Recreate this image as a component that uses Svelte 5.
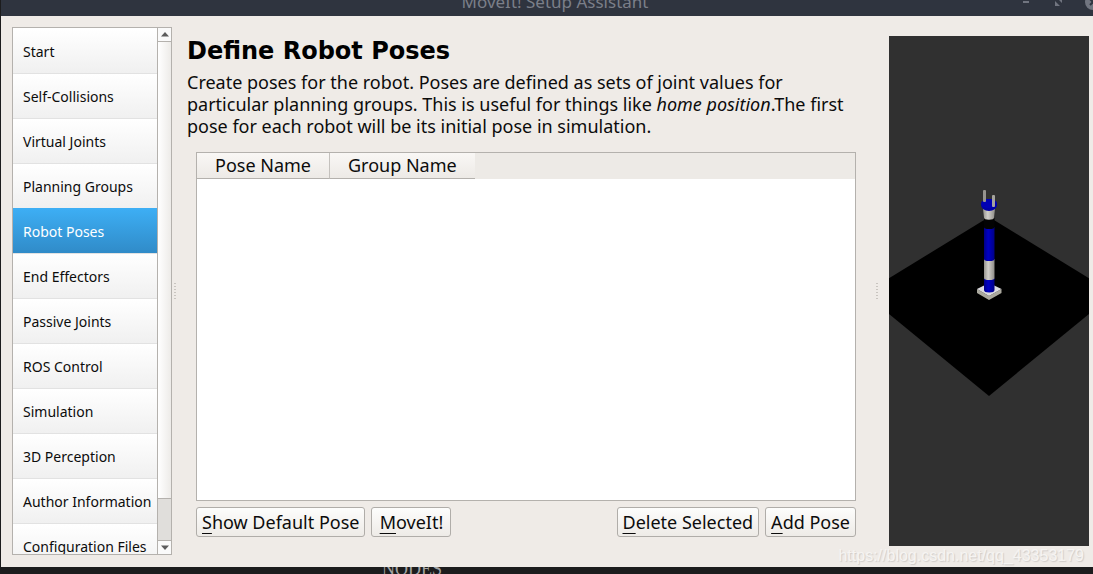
<script lang="ts">
	const steps: string[] = [
		'Start',
		'Self-Collisions',
		'Virtual Joints',
		'Planning Groups',
		'Robot Poses',
		'End Effectors',
		'Passive Joints',
		'ROS Control',
		'Simulation',
		'3D Perception',
		'Author Information',
		'Configuration Files'
	];

	const columns: string[] = ['Pose Name', 'Group Name'];

	let selected = $state('Robot Poses');
</script>

<div class="desktop">
	<header class="titlebar">
		<span class="title">MoveIt! Setup Assistant</span>
		<div class="window-controls">
			<button aria-label="Minimize">
				<svg width="10" height="10" viewBox="0 0 10 10"><path d="M2 5h6" stroke="#717580" stroke-width="2" /></svg>
			</button>
			<button aria-label="Maximize">
				<svg width="10" height="10" viewBox="0 0 10 10"><path d="M4 1h5v5zM2 4v5h5z" fill="#717580" /></svg>
			</button>
			<button aria-label="Close">
				<svg width="16" height="16" viewBox="0 0 16 16">
					<circle cx="8" cy="8" r="8" fill="#717580" />
					<path d="M5 5l6 6M11 5l-6 6" stroke="#2f343f" stroke-width="2" />
				</svg>
			</button>
		</div>
	</header>

	<main class="window">
		<div class="sidebar">
			<nav class="steps">
				{#each steps as step}
					<button class="step" class:active={step === selected} onclick={() => (selected = step)}>{step}</button>
				{/each}
			</nav>
			<div class="scrollbar">
				<button class="arrow" aria-label="Scroll up">
					<svg width="8" height="5" viewBox="0 0 8 5"><path d="M4 0l4 4.500H0z" fill="#5c5c5c" /></svg>
				</button>
				<div class="thumb"></div>
				<div class="groove"></div>
				<button class="arrow down" aria-label="Scroll down">
					<svg width="8" height="5" viewBox="0 0 8 5"><path d="M4 5l4-4.500H0z" fill="#5c5c5c" /></svg>
				</button>
			</div>
		</div>

		<div class="splitter"></div>

		<section class="content">
			<h1>Define Robot Poses</h1>
			<p>
				Create poses for the robot. Poses are defined as sets of joint values for<br />
				particular planning groups. This is useful for things like <em>home position</em>.The first<br />
				pose for each robot will be its initial pose in simulation.
			</p>

			<div class="pose-area">
				<div class="table-frame">
					<table>
						<thead>
							<tr>
								{#each columns as column}
									<th>{column}</th>
								{/each}
							</tr>
						</thead>
					</table>
				</div>
				<div class="actions">
					<button><u>S</u>how Default Pose</button>
					<button class="moveit"><u>M</u>oveIt!</button>
					<span class="spacer"></span>
					<button><u>D</u>elete Selected</button>
					<button><u>A</u>dd Pose</button>
				</div>
			</div>
		</section>

		<div class="splitter"></div>

		<div class="viewer">
			<svg viewBox="0 0 200 510" preserveAspectRatio="xMidYMid slice" role="img" aria-label="Robot model">
				<defs>
					<linearGradient id="blue">
						<stop offset="0" stop-color="#000086" />
						<stop offset="0.4" stop-color="#0000c4" />
						<stop offset="1" stop-color="#000086" />
					</linearGradient>
					<linearGradient id="grey">
						<stop offset="0" stop-color="#96948e" />
						<stop offset="0.4" stop-color="#d2d0cb" />
						<stop offset="1" stop-color="#8e8c87" />
					</linearGradient>
				</defs>
				<rect width="200" height="510" fill="#303030" />
				<path d="M100 181L225 257.500L100 360L-25 257.500z" fill="#000" />

				<!-- base -->
				<path d="M88 253v4l12 7 12.500-7v-4L100 260z" fill="#aaa89d" />
				<path d="M88 253l12-6 12.500 6L100 260z" fill="#dcdbe0" />

				<!-- arm links -->
				<path d="M95 242h10.500v12a5.200 2.500 0 0 1-10.500 0z" fill="url(#blue)" />
				<path d="M95 223h10.500v19a5.200 2 0 0 1-10.500 0z" fill="url(#grey)" />
				<path d="M95 191h10.500v32a5.200 2 0 0 1-10.500 0z" fill="url(#blue)" />
				<path d="M95 182h10.500v9a5.200 2 0 0 1-10.500 0z" fill="#030303" />
				<path d="M94 173h12l-1 8.500a5 2.200 0 0 1-10 0z" fill="url(#grey)" />

				<!-- gripper -->
				<ellipse cx="100" cy="169" rx="8" ry="6" fill="#0000a6" />
				<ellipse cx="100" cy="167.500" rx="8" ry="4.500" fill="#0000b4" />
				<rect x="94" y="154" width="3" height="12" rx="1" fill="#96948f" />
				<rect x="103" y="159" width="3" height="12" rx="1" fill="#a5a39e" />
			</svg>
		</div>
	</main>

	<footer class="terminal">NODES</footer>
	<div class="watermark">https://blog.csdn.net/qq_43353179</div>
</div>

<style>
	:global(body) {
		margin: 0;
	}

	.desktop {
		position: relative;
		display: flex;
		flex-direction: column;
		height: 100vh;
		overflow: hidden;
		background: #1c1c1d;
		color: #0c0c0c;
		font-family: 'Noto Sans', 'Open Sans', sans-serif;
	}

	button {
		margin: 0;
		font-family: inherit;
		color: inherit;
	}

	.titlebar {
		display: grid;
		grid-template-columns: 1fr auto 1fr;
		grid-template-rows: 28px;
		align-content: end;
		align-items: center;
		flex: none;
		height: 16px;
		margin-left: 1px;
		overflow: hidden;
		background: #2f343f;
	}

	.title {
		grid-column: 2;
		margin-left: 16px;
		font-size: 17px;
		line-height: 28px;
		color: #7b7f89;
	}

	.window-controls {
		display: flex;
		justify-content: flex-end;
		align-items: center;
		gap: 22px;
		margin-right: -8px;
	}

	.window-controls button {
		display: flex;
		padding: 0;
		border: 0;
		background: none;
	}

	.window {
		display: flex;
		flex: 1;
		min-height: 0;
		margin-left: 1px;
		padding: 11px 4px 12px 11px;
		background: #efebe7;
	}

	.sidebar {
		display: flex;
		flex: none;
		box-sizing: border-box;
		width: 160px;
		border: 1px solid #b4b1ad;
	}

	.steps {
		flex: 1;
		overflow: hidden;
		background: #fff;
	}

	.step {
		display: block;
		box-sizing: border-box;
		width: 100%;
		height: 45px;
		padding: 0 0 0 10px;
		border: 0;
		border-top: 1px solid #e2e2e2;
		background: linear-gradient(#fff, #f0f0f0);
		font-size: 14px;
		text-align: left;
		white-space: nowrap;
	}

	.step:first-child {
		border-top-color: #fff;
	}

	.step.active {
		border-top-color: #3daef4;
		background: linear-gradient(#3daef4, #308bc8);
		color: #fff;
	}

	.scrollbar {
		display: flex;
		flex-direction: column;
		width: 13px;
		border-left: 1px solid #b4b1ad;
	}

	.arrow {
		display: flex;
		align-items: center;
		justify-content: center;
		box-sizing: border-box;
		height: 14px;
		padding: 0;
		border: 0;
		border-bottom: 1px solid #b4b1ad;
		background: #fafafa;
	}

	.arrow.down {
		border-top: 1px solid #b4b1ad;
		border-bottom: 0;
	}

	.thumb {
		flex: 11;
		border-bottom: 1px solid #b4b1ad;
		background: linear-gradient(to right, #fff, #edebe8);
	}

	.groove {
		flex: 1;
		background: #e0dedb;
	}

	.splitter {
		align-self: center;
		flex: none;
		width: 2px;
		height: 17px;
		margin: 0 2px;
		background: repeating-linear-gradient(#c9c5c0 0 1px, transparent 1px 3px);
	}

	.content {
		display: flex;
		flex: 1;
		flex-direction: column;
		min-width: 0;
		padding: 10px 18px 5px 9px;
	}

	h1 {
		margin: 0;
		font-family: 'DejaVu Sans', sans-serif;
		font-size: 24px;
		line-height: 28px;
		color: #000;
	}

	p {
		margin: 6px 0 15px;
		font-size: 18px;
		line-height: 22px;
		white-space: nowrap;
	}

	.pose-area {
		display: flex;
		flex: 1;
		flex-direction: column;
		gap: 6px;
		min-height: 0;
		padding: 0 0 13px 9px;
	}

	.table-frame {
		flex: 1;
		border: 1px solid #b4b1ad;
		background: linear-gradient(#edeae6 0 26px, #fff 26px);
	}

	table {
		border-collapse: separate;
		border-spacing: 0;
	}

	th {
		box-sizing: border-box;
		height: 26px;
		padding: 0 18px;
		border-bottom: 1px solid #b4b1ad;
		background: linear-gradient(#f9f7f5, #edeae6);
		font-size: 18px;
		font-weight: 400;
		line-height: 25px;
	}

	th:first-child {
		border-right: 1px solid #c4c1bd;
	}

	.actions {
		display: flex;
		gap: 6px;
	}

	.spacer {
		flex: 1;
	}

	.actions button {
		height: 30px;
		padding: 0 5px;
		border: 1px solid #b0ada9;
		border-radius: 3px;
		background: linear-gradient(#fdfdfc, #eeebe7);
		font-size: 18px;
		line-height: 26px;
		white-space: nowrap;
	}

	.actions .moveit {
		min-width: 80px;
	}

	u {
		text-decoration-thickness: 1px;
		text-underline-offset: 4px;
	}

	.viewer {
		flex: none;
		width: 200px;
		margin: 9px 0 9px 9px;
	}

	.viewer svg {
		display: block;
		width: 100%;
		height: 100%;
	}

	.terminal {
		display: flex;
		align-items: flex-end;
		flex: none;
		height: 7px;
		padding-left: 382px;
		overflow: hidden;
		font-family: 'Liberation Serif', serif;
		font-size: 18px;
		line-height: 10px;
		color: #a3a3a3;
	}

	.watermark {
		position: absolute;
		right: 9px;
		bottom: 8px;
		font-family: 'Liberation Sans', sans-serif;
		font-size: 16px;
		line-height: 20px;
		color: #f6f4f2;
		text-shadow: 1px 1px 1px #cfccc9;
	}
</style>
